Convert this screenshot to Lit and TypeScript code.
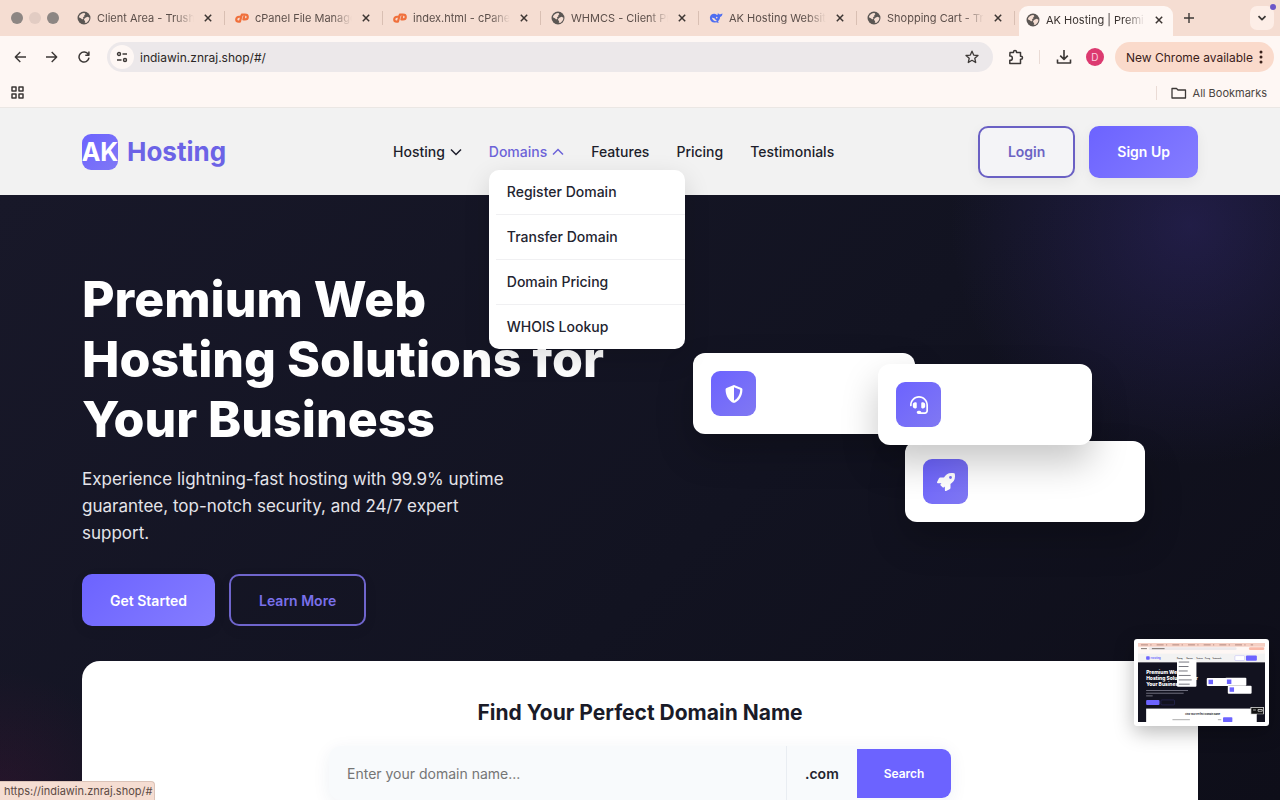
import { LitElement, html, css, svg, nothing } from "lit";
import { customElement, property } from "lit/decorators.js";

const globe = svg`<circle cx="8" cy="8" r="7.4" fill="#5b5653"/>
  <path d="M2.3 6.2C3.6 3.4 6 2 8.6 2.2L9.6 3.6 8.2 4.8 8.6 6 6.8 7 7.6 8.4 6 9.6 4.4 8.4 2.4 7.4Z" fill="#f5ddd2"/>
  <path d="M10 7.4l2.2-.8 2 1.2c0 2.6-1.6 4.8-3.8 5.8l-1.6-.4.6-1.8-1.6-1.2L8.6 8.600Z" fill="#f5ddd2"/>`;
const cpanel = svg`<g fill="none" stroke="#f0703c" stroke-width="2.5" stroke-linecap="round" stroke-linejoin="round">
  <path d="M6.200 6.600H4.600C2.800 6.600 1.400 8 1.400 9.700S2.600 12.200 4.200 12.200H5.600L7.800 4.200H11.400C13.200 4.200 14.600 5.200 14.600 6.800S13.200 9.600 11.400 9.600H9.600L10.500 6.600"/></g>`;
const whale = svg`<path d="M1 7.600C1.200 4.800 3.600 3 6.200 3.200c1.500.1 2.200 1 3.200 1.500.8-.3.300-1.500.9-2.300.6 1 1.200 1.600 2.200 1.400 1-.1 1.700-.8 2.900-1-.1 2.200-1 3.600-2.700 4.100-.2 2.300-1.100 3.900-2.500 5 .5.500 1 .6 1.400 1-1.200.7-2.500.5-3.500-.1C4.400 14 1 11.600 1 7.600Z" fill="#4f6ef0"/>
  <path d="M3.200 7.800c2-.4 3.400.6 4.400 2.200.5.700 1 1.300 1.800 1.500-2.600.7-5.600-1-6.200-3.700Z" fill="#f5ddd2"/><circle cx="8.800" cy="7.600" r=".9" fill="#f5ddd2"/>`;

const tabs = [
  { title: "Client Area - Trush", icon: globe },
  { title: "cPanel File Manage", icon: cpanel },
  { title: "index.html - cPanel", icon: cpanel },
  { title: "WHMCS - Client Pr", icon: globe },
  { title: "AK Hosting Website", icon: whale },
  { title: "Shopping Cart - Tr", icon: globe },
  { title: "AK Hosting | Premi", icon: globe, active: true },
];

@customElement("browser-tab")
class BrowserTab extends LitElement {
  @property({ attribute: false }) icon: unknown = nothing;
  @property() label = "";
  @property({ type: Boolean, reflect: true }) active = false;
  static styles = css`
    :host { display: flex; flex: 0 1 158px; min-width: 0; height: 30px; align-items: center; box-sizing: border-box;
      padding: 0 9px 0 10px; gap: 6px; position: relative; color: #5c4f4a; font-size: 11px; }
    :host::after { content: ""; position: absolute; right: 0; top: 8px; width: 1px; height: 14px; background: #d9bfb3; }
    :host([active]) { background: #fef7f4; border-radius: 9px 9px 0 0; color: #3a3330; flex-basis: 154px; margin-left: 4px; padding: 0 6px 0 7px; }
    :host([active])::after { display: none; }
    .icon { width: 14px; height: 14px; flex: none; }
    .label { flex: 1; min-width: 0; overflow: hidden; white-space: nowrap;
      -webkit-mask-image: linear-gradient(90deg, #000 calc(100% - 20px), transparent); mask-image: linear-gradient(90deg, #000 calc(100% - 20px), transparent); }
    button { flex: none; width: 16px; height: 16px; padding: 0; border: 0; background: none; display: grid; place-items: center; }
  `;
  render() {
    return html`<svg class="icon" viewBox="0 0 16 16">${this.icon}</svg>
      <span class="label">${this.label}</span>
      <button aria-label="Close tab"><svg width="8" height="8" viewBox="0 0 8 8"><path d="M.8.8l6.400 6.400M7.200.8L.8 7.200" stroke="#3c3532" stroke-width="1.500"/></svg></button>`;
  }
}

@customElement("browser-chrome")
class BrowserChrome extends LitElement {
  static styles = css`
    :host { display: block; color: #2b2725; }
    button { border: 0; padding: 0; margin: 0; background: none; font: inherit; color: inherit; display: grid; place-items: center; }
    .strip { display: flex; align-items: flex-end; height: 36px; background: #f5ddd2; position: relative; }
    .dots { display: flex; gap: 6px; flex: none; width: 67px; height: 36px; align-items: center; padding-left: 11px; box-sizing: border-box; }
    .dot { width: 12px; height: 12px; border-radius: 50%; background: #8d8683; }
    .dot.pale { background: #e2ccc3; }
    .strip > * { flex-shrink: 0; }
    .strip browser-tab { flex-shrink: 1; margin-bottom: 3px; }
    .strip browser-tab[active] { margin-bottom: 0; padding-bottom: 3px; height: 30px; box-sizing: border-box; }
    .plus { width: 24px; height: 24px; margin: 0 0 6px 4px; }
    .list { width: 24px; height: 24px; margin: 0 6px 6px auto; background: #fdeee7; border-radius: 7px; }
    .notice { position: absolute; right: 4px; top: 4px; width: 6px; height: 6px; border-radius: 50%; background: #6c55c8; }
    .bar { display: flex; align-items: center; height: 42px; background: #fef7f4; padding: 0 6px 0 10px; }
    .nav { width: 20px; height: 20px; margin-right: 12px; }
    .omni { flex: 1; display: flex; align-items: center; height: 30px; border-radius: 15px; background: #ece8ea; margin: 0 14px 0 1px; padding: 0 14px 0 3px; }
    .site { width: 24px; height: 24px; border-radius: 50%; background: #fef7f4; }
    .omni input { flex: 1; min-width: 0; border: 0; background: none; font: inherit; font-size: 12px; color: #2b2725; padding: 0 0 0 6px; outline: 0; }
    .line { width: 1px; height: 14px; background: #eadbd5; }
    .bar .line { margin: 0 16px 0 14px; }
    .avatar { width: 18px; height: 18px; border-radius: 50%; background: #dc3a70; color: #fbd3e0; font-size: 10px; margin: 0 11px 0 14px; }
    .update { display: flex; align-items: center; height: 30px; border-radius: 15px; background: #fadacb; color: #3a211a; font-size: 12px; padding: 0 11px 0 11px; gap: 6px; }
    .marks { display: flex; align-items: center; height: 30px; box-sizing: border-box; background: #fef7f4; padding: 0 13px 0 11px; border-bottom: 1px solid #ebe7e4; font-size: 11px; color: #4a4441; }
    .all { display: flex; align-items: center; gap: 6px; margin-left: 14px; }
    .marks .line { margin-left: auto; }
  `;
  render() {
    const s = (d: string, w = 1.5) => svg`<path d=${d} fill="none" stroke="#3c3836" stroke-width=${w} stroke-linejoin="round"/>`;
    return html`
      <div class="strip">
        <div class="dots"><span class="dot"></span><span class="dot pale"></span><span class="dot"></span></div>
        ${tabs.map((t) => html`<browser-tab .icon=${t.icon} .label=${t.title} ?active=${!!t.active}></browser-tab>`)}
        <button class="plus" aria-label="New tab"><svg width="12" height="12">${s("M6 1v10M1 6h10", 1.4)}</svg></button>
        <button class="list" aria-label="Search tabs"><svg width="10" height="10">${s("M1.500 3.200L5 6.700 8.500 3.200", 1.700)}</svg></button>
        <span class="notice"></span>
      </div>
      <div class="bar">
        <button class="nav" aria-label="Back"><svg width="12" height="12">${s("M12 6H1.500M6.300 1L1.300 6l5 5", 1.400)}</svg></button>
        <button class="nav" aria-label="Forward"><svg width="12" height="12">${s("M0 6h10.500M5.700 1l5 5-5 5", 1.400)}</svg></button>
        <button class="nav" aria-label="Reload"><svg width="12" height="12">${s("M10.300 3.400A5 5 0 1 0 11 6.600M10.900.6V4.200H7.300", 1.500)}</svg></button>
        <div class="omni">
          <button class="site" aria-label="Site information"><svg width="12" height="12">${s("M6.500 3H11M1 9h4.500", 1.500)}<circle cx="3" cy="3" r="1.500" fill="none" stroke="#3c3836" stroke-width="1.400"/><circle cx="9" cy="9" r="1.500" fill="none" stroke="#3c3836" stroke-width="1.400"/></svg></button>
          <input aria-label="Address" value="indiawin.znraj.shop/#/" />
          <button aria-label="Bookmark this page"><svg width="14" height="14">${s("M7 1.200l1.700 3.900 4.300.4-3.200 2.800.9 4.200L7 10.300l-3.700 2.200.9-4.200L1 5.500l4.300-.4Z", 1.300)}</svg></button>
        </div>
        <button aria-label="Extensions"><svg width="18" height="18" viewBox="0 0 18 18">${s("M3 4.500H6.500V4a1.500 1.500 0 0 1 3 0v.5H13.500V8.200H14a1.500 1.500 0 0 1 0 3h-.5V15.500H2.800V12.300H3.200a1.900 1.900 0 0 0 0-4.300H2.800Z", 1.500)}</svg></button>
        <span class="line"></span>
        <button aria-label="Downloads"><svg width="16" height="16">${s("M8 1v9M4.200 6.600L8 10.400l3.800-3.800M1.500 10.500v3.500h13v-3.500", 1.600)}</svg></button>
        <button class="avatar" aria-label="Profile">D</button>
        <button class="update">New Chrome available
          <svg width="4" height="14" fill="#3a211a"><circle cx="2" cy="2" r="1.500"/><circle cx="2" cy="7" r="1.500"/><circle cx="2" cy="12" r="1.500"/></svg></button>
      </div>
      <div class="marks">
        <button aria-label="Apps"><svg width="13" height="13">${s("M1 1h4v4H1ZM8 1h4v4H8ZM1 8h4v4H1ZM8 8h4v4H8Z", 1.500)}</svg></button>
        <span class="line"></span>
        <button class="all"><svg width="16" height="12">${s("M1 1.500h4.500l1.500 1.500h7.500v8H1Z", 1.300)}</svg>All Bookmarks</button>
      </div>`;
  }
}

@customElement("screen-thumbnail")
class ScreenThumbnail extends LitElement {
  static styles = css`
    :host { display: block; background: #fff; border-radius: 3px; padding: 4px; box-shadow: 0 6px 20px rgba(0, 0, 0, 0.28); box-sizing: border-box; }
    svg { display: block; width: 100%; height: auto; font-family: Inter, sans-serif; }
  `;
  render() {
    return html`<svg viewBox="0 0 1280 800" role="img" aria-label="Screen capture">
      <rect width="1280" height="800" fill="#fef7f4"/><rect width="1280" height="37" fill="#f5cfc3"/>
      <rect x="108" y="43" width="886" height="28" rx="14" fill="#ece8ea"/><rect x="1118" y="43" width="155" height="28" rx="14" fill="#f9b9a8"/>
      <path d="M30 19H1160" stroke="#b28b84" stroke-width="10" stroke-dasharray="70 24 12 52"/>
      <path d="M140 57h128M30 57h60" stroke="#5c4f4a" stroke-width="8"/>
      <rect y="108" width="1280" height="88" fill="#f2f2f2"/>
      <rect x="82" y="134" width="36" height="36" rx="8" fill="#6c63ff"/>
      <text x="127" y="162" font-size="27" font-weight="700" fill="#6c63ff">Hosting</text>
      <text x="393" y="157" font-size="15" fill="#222" font-weight="600">Hosting</text><text x="488" y="157" font-size="15" fill="#222" font-weight="600">Domains</text>
      <text x="590" y="157" font-size="15" fill="#222" font-weight="600">Features</text><text x="675" y="157" font-size="15" fill="#222" font-weight="600">Pricing</text><text x="750" y="157" font-size="15" fill="#222" font-weight="600">Testimonials</text>
      <rect x="977" y="127" width="97" height="50" rx="10" fill="#fff" stroke="#8f89f0" stroke-width="3"/><rect x="1088" y="126" width="110" height="52" rx="10" fill="#6c63ff"/>
      <rect y="195" width="1280" height="605" fill="#12121f"/>
      <g fill="#fff" font-size="50" font-weight="800"><text x="82" y="317">Premium Web</text><text x="82" y="377">Hosting Solutions for</text><text x="82" y="437">Your Business</text></g>
      <path d="M82 479H504M82 506H460M82 533H148" stroke="#9a9aa8" stroke-width="7"/>
      <rect x="393" y="170" width="196" height="270" rx="10" fill="#fff"/>
      <path d="M411 192h105M411 237h98M411 282h90M411 327h120M411 372h130M411 415h110" stroke="#55555f" stroke-width="8"/>
      <rect x="82" y="574" width="135" height="51" rx="10" fill="#6c63ff"/><rect x="231" y="574" width="137" height="50" rx="10" fill="none" stroke="#4b46a5" stroke-width="3"/>
      <rect x="693" y="352" width="222" height="81" rx="10" fill="#fff"/><rect x="878" y="350" width="214" height="81" rx="10" fill="#fff"/><rect x="905" y="430" width="240" height="81" rx="10" fill="#fff"/>
      <g fill="#6c63ff"><rect x="711" y="370" width="45" height="45"/><rect x="896" y="368" width="45" height="45"/><rect x="923" y="447" width="45" height="45"/></g>
      <rect x="82" y="661" width="1116" height="139" fill="#fff"/>
      <text x="475" y="722" font-size="23" font-weight="700" fill="#171824">Find Your Perfect Domain Name</text>
      <path d="M347 773h176M805 773h34" stroke="#888" stroke-width="7"/><rect x="857" y="748" width="94" height="49" rx="8" fill="#6c63ff"/>
      <rect x="1134" y="645" width="135" height="75" fill="#ddd"/><rect x="1142" y="653" width="119" height="60" fill="#111"/>
      <path d="M1160 675h28M1210 670h42v18h-42Z" stroke="#fff" stroke-width="7"/><rect x="1198" y="720" width="82" height="80" fill="#12121f"/>
    </svg>`;
  }
}

@customElement("app-root")
class AppRoot extends LitElement {
  static styles = css`
    :host { display: flex; flex-direction: column; height: 100vh; overflow: hidden; position: relative; font-family: Inter, "Liberation Sans", sans-serif; background: #12121f; }
    * { box-sizing: border-box; }
    a { text-decoration: none; color: inherit; }
    ul { list-style: none; margin: 0; padding: 0; }
    .header { flex: none; height: 87px; background: #f2f2f2; position: relative; z-index: 2; display: flex; align-items: center; justify-content: space-between; padding: 0 82px; }
    .logo { display: flex; align-items: center; gap: 9px; font-size: 26px; font-weight: 700; color: #6c63e6; width: 311px; }
    .mark { width: 36px; height: 36px; border-radius: 9px; background: linear-gradient(135deg, #6c63ff, #8078f5); color: #fff; font-size: 25px; display: flex; align-items: center; justify-content: center; }
    .menu { display: flex; gap: 27px; font-size: 14px; font-weight: 500; color: #1d1e2b; flex: 1; }
    .menu > li { position: relative; line-height: 24px; }
    .menu > li > a { display: flex; align-items: center; gap: 5px; }
    .current { color: #6c63d8; }
    .drop { position: absolute; left: 0; top: 30px; width: 196px; background: #fff; border-radius: 10px; box-shadow: 0 9px 27px rgba(0, 0, 0, 0.14); color: #23242f; padding-left: 7px; }
    .drop li { padding: 10px 11px; height: 45px; border-bottom: 1px solid #f0f0f2; }
    .drop li:last-child { border: 0; height: 44px; }
    .actions { display: flex; gap: 14px; }
    button { font: inherit; }
    .btn { height: 52px; border-radius: 10px; padding: 0 28px; font-size: 14px; font-weight: 600; border: 0; color: #fff; background: linear-gradient(135deg, #6c63ff, #857dff); box-shadow: 0 4px 14px rgba(0, 0, 0, 0.06); white-space: nowrap; }
    .outline { background: none; border: 2px solid #6a60c4; color: #6c63c4; }
    .actions .outline { background: #f4f4f7; }
    .hero { flex: 1; min-height: 0; padding: 74px 82px 0; background:
      radial-gradient(circle 240px at 93% 5%, rgba(70, 55, 160, 0.3), transparent),
      radial-gradient(circle 130px at 0% 100%, rgba(90, 20, 60, 0.26), transparent),
      linear-gradient(135deg, #181829 0%, #121321 55%, #0e0e19 100%); }
    .columns { display: grid; grid-template-columns: minmax(0, 530px) minmax(0, 1fr); gap: 54px; }
    h1 { margin: 0; font-size: 50px; line-height: 60px; font-weight: 800; color: #fff; }
    .lead { margin: 17px 0 27px; font-size: 17px; line-height: 27px; color: #e4e4ea; max-width: 440px; }
    .cta { display: flex; gap: 14px; }
    .cta .outline { color: #7a70ea; border-color: #6f65cc; }
    .canvas { position: relative; }
    .float { position: absolute; height: 81px; border-radius: 12px; background: #fff; padding: 18px; box-shadow: 0 18px 36px rgba(0, 0, 0, 0.22); }
    .tile { width: 45px; height: 45px; border-radius: 9px; background: linear-gradient(135deg, #6c63ff, #8078f2); display: grid; place-items: center; }
    .one { left: 27px; top: 84px; width: 222px; }
    .two { left: 212px; top: 95px; width: 214px; z-index: 1; }
    .three { left: 239px; top: 172px; width: 240px; }
    .finder { margin-top: 35px; min-height: 240px; background: #fff; border-radius: 18px; padding: 36px; display: flex; flex-direction: column; align-items: center; }
    h2 { margin: 0 0 17px; font-size: 21px; line-height: 32px; font-weight: 700; color: #1a1b28; }
    .search { display: flex; width: 100%; max-width: 622px; height: 54px; border-radius: 12px; background: #f8fafc; box-shadow: 0 4px 18px rgba(30, 60, 110, 0.07); align-items: center; }
    .search input { flex: 1; min-width: 0; height: 54px; border: 0; background: none; padding: 0 18px; font: inherit; font-size: 14px; }
    .search input::placeholder { color: #757575; }
    .tld { height: 54px; padding: 0 18px; border: 0; border-left: 1px solid #e9edf2; background: none; appearance: none; font: inherit; font-size: 14px; font-weight: 600; color: #23242f; }
    .go { width: 94px; height: 49px; border: 0; border-radius: 0 9px 9px 0; background: #6c63ff; color: #fff; font-size: 12px; font-weight: 600; }
    .status { position: absolute; left: 0; bottom: 0; z-index: 3; height: 19px; line-height: 18px; padding: 0 2px 0 4px; font-size: 11px; color: #5c4a44; background: #f5ddd2; border: 1px solid #dbc3b8; border-width: 1px 1px 0 0; border-radius: 0 4px 0 0; }
    screen-thumbnail { position: absolute; right: 11px; bottom: 74px; width: 135px; z-index: 3; }
  `;
  render() {
    const chev = (d: string) => html`<svg width="12" height="8" viewBox="0 0 12 8"><path d=${d} fill="none" stroke="currentColor" stroke-width="1.500"/></svg>`;
    return html`
      <browser-chrome></browser-chrome>
      <header class="header">
        <a class="logo" href="#/"><span class="mark">AK</span>Hosting</a>
        <ul class="menu">
          <li><a href="#">Hosting ${chev("M1 1.500l5 5 5-5")}</a></li>
          <li><a class="current" href="#">Domains ${chev("M1 6.500l5-5 5 5")}</a>
            <ul class="drop">${["Register Domain", "Transfer Domain", "Domain Pricing", "WHOIS Lookup"].map((t) => html`<li><a href="#">${t}</a></li>`)}</ul></li>
          <li><a href="#">Features</a></li><li><a href="#">Pricing</a></li><li><a href="#">Testimonials</a></li>
        </ul>
        <div class="actions"><button class="btn outline">Login</button><button class="btn">Sign Up</button></div>
      </header>
      <main class="hero">
        <div class="columns">
          <div>
            <h1>Premium Web Hosting Solutions for Your Business</h1>
            <p class="lead">Experience lightning-fast hosting with 99.9% uptime guarantee, top-notch security, and 24/7 expert support.</p>
            <div class="cta"><button class="btn">Get Started</button><button class="btn outline">Learn More</button></div>
          </div>
          <div class="canvas">
            <div class="float one"><div class="tile"><svg width="18" height="18" viewBox="0 0 512 512"><path fill="#fff" d="M466.500 83.700l-192-80a48.150 48.150 0 0 0-36.900 0l-192 80C27.700 91.100 16 108.600 16 128c0 198.500 114.500 335.700 221.500 380.300 11.800 4.900 25.100 4.900 36.900 0C360.100 472.600 496 349.300 496 128c0-19.400-11.700-36.900-29.500-44.300zM256.100 446.300l-.1-381 175.900 73.300c-3.300 151.400-82.100 261.100-175.800 307.700z"/></svg></div></div>
            <div class="float two"><div class="tile"><svg width="18" height="18" viewBox="0 0 512 512"><path fill="#fff" d="M192 208c0-17.670-14.330-32-32-32h-16c-35.350 0-64 28.650-64 64v48c0 35.350 28.650 64 64 64h16c17.670 0 32-14.330 32-32V208zm176 144c35.350 0 64-28.650 64-64v-48c0-35.350-28.650-64-64-64h-16c-17.670 0-32 14.330-32 32v112c0 17.670 14.330 32 32 32h16zM256 0C113.180 0 4.580 118.830 0 256v16c0 8.840 7.160 16 16 16h16c8.840 0 16-7.160 16-16v-16c0-114.690 93.310-208 208-208s208 93.310 208 208h-.12c.08 2.430.12 165.720.12 165.720 0 23.350-18.930 42.280-42.280 42.280H320c0-26.510-21.490-48-48-48h-32c-26.510 0-48 21.490-48 48s21.490 48 48 48h181.720c49.860 0 90.280-40.420 90.280-90.280V256C507.420 118.830 398.820 0 256 0z"/></svg></div></div>
            <div class="float three"><div class="tile"><svg width="18" height="18" viewBox="0 0 512 512"><path fill="#fff" d="M505.120 19.090c-1.190-5.530-6.660-11-12.210-12.180C460.710 0 435.510 0 410.410 0 307.180 0 245.270 55.200 199.050 128H94.840c-16.350 0-35.560 11.870-42.880 26.480L2.530 253.290A28.400 28.400 0 0 0 0 264a24 24 0 0 0 24.010 24h103.850l-22.470 22.470c-11.370 11.370-13 32.260 0 45.250l50.900 50.910c11.150 11.190 32.150 13.140 45.270 0l22.470-22.470V488a24 24 0 0 0 24 24 28.600 28.600 0 0 0 10.700-2.530l98.730-49.390c14.630-7.300 26.500-26.500 26.500-42.860V312.800C456.500 266.480 512 204.350 512 101.790c.09-25.290.09-50.500-6.880-82.700zM384.040 168a40 40 0 1 1 0-80 40 40 0 0 1 0 80z"/></svg></div></div>
          </div>
        </div>
        <section class="finder">
          <h2>Find Your Perfect Domain Name</h2>
          <form class="search" @submit=${(e: Event) => e.preventDefault()}>
            <input aria-label="Domain name" placeholder="Enter your domain name..." />
            <select class="tld" aria-label="Extension"><option>.com</option></select>
            <button class="go">Search</button>
          </form>
        </section>
      </main>
      <screen-thumbnail></screen-thumbnail>
      <div class="status">https://indiawin.znraj.shop/#</div>`;
  }
}
